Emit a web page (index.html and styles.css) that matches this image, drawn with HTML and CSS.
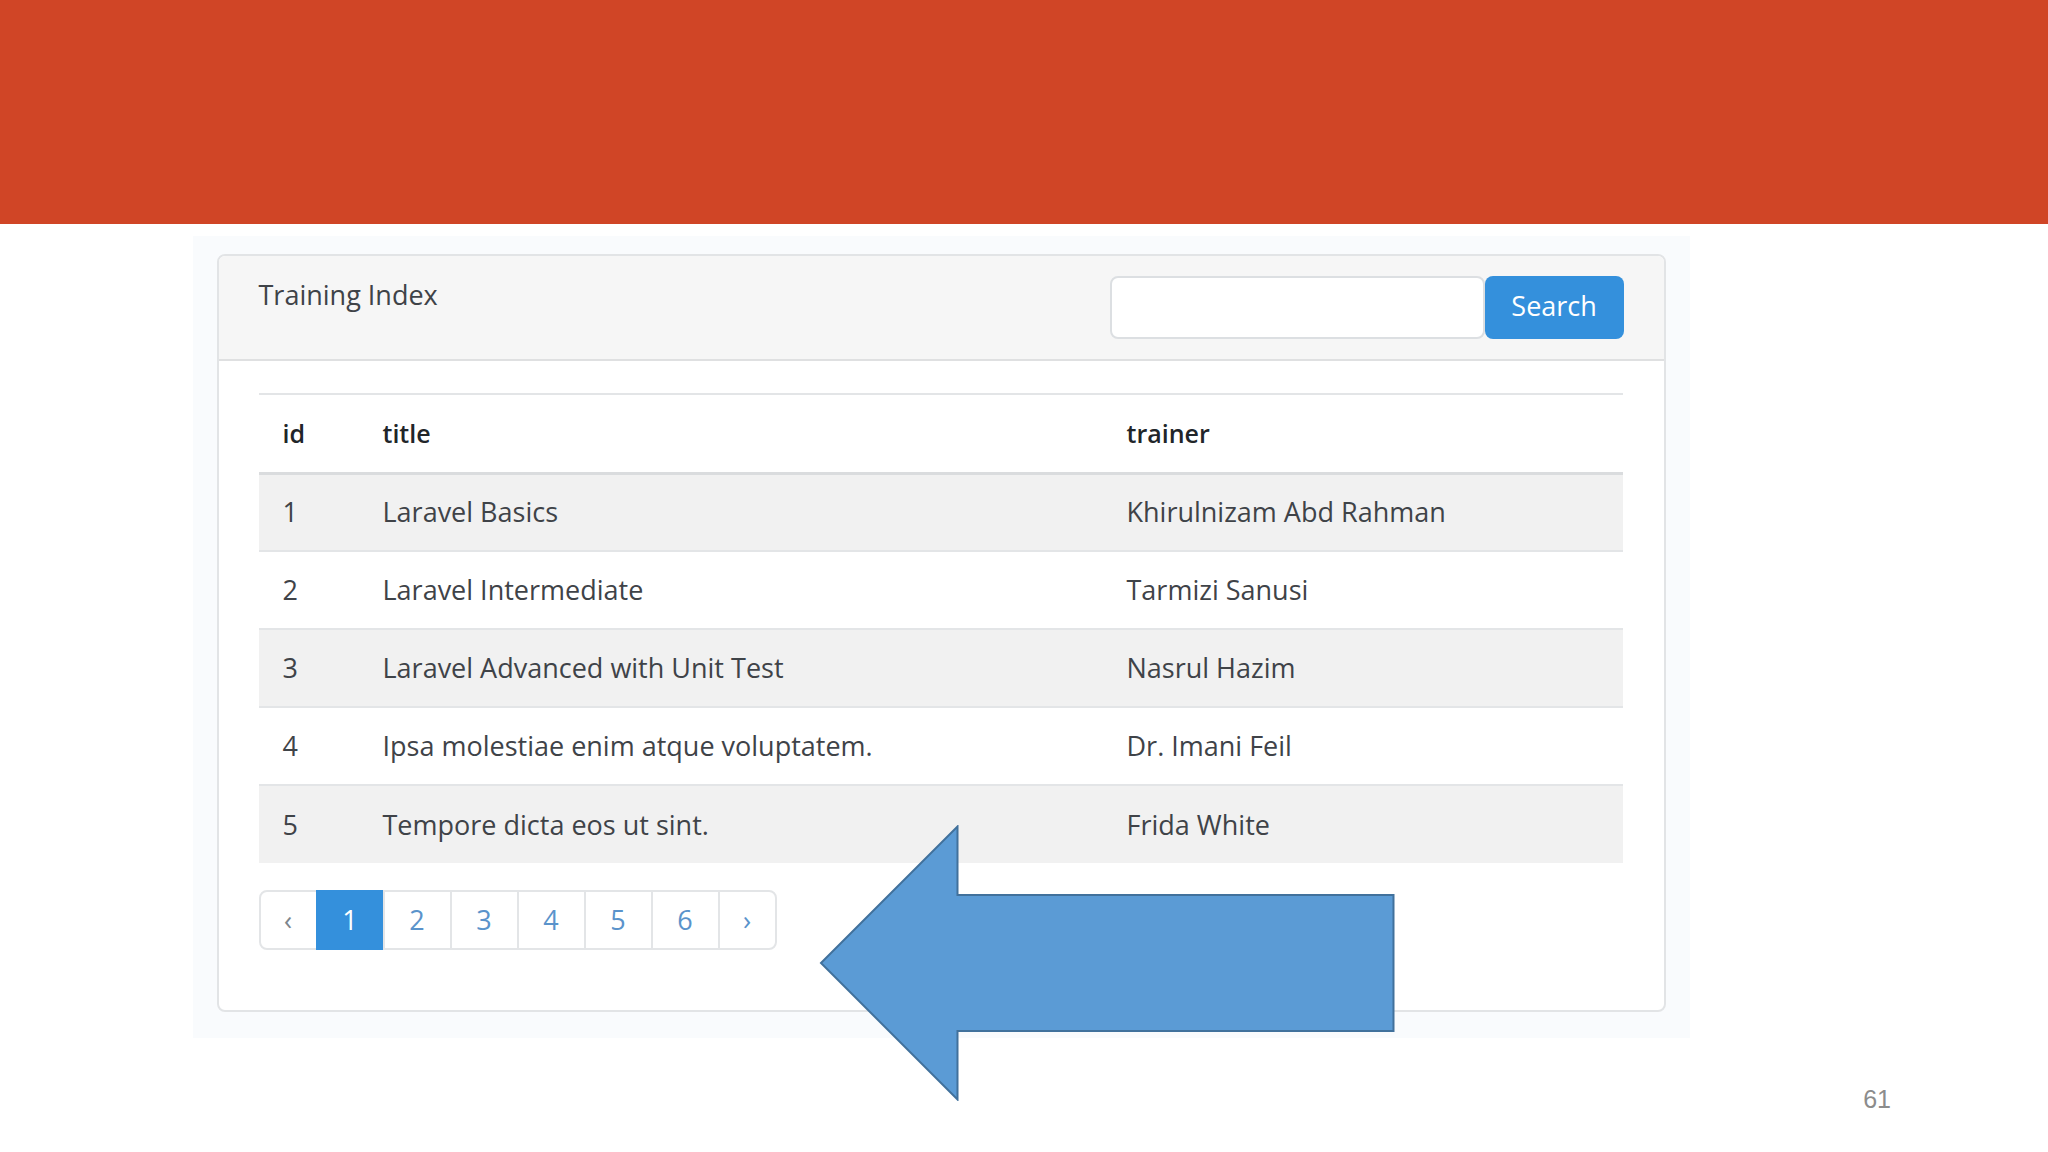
FILE: index.html
```
<!DOCTYPE html>
<html lang="en">
<head>
    <meta charset="UTF-8">
    <meta name="viewport" content="width=device-width, initial-scale=1.0">
    <title>Training Index</title>
    <link rel="stylesheet" href="styles.css">
</head>
<body>

<header class="banner"></header>

<main class="app">
    <div class="card">
        <div class="card-header">
            <span>Training Index</span>
            <form class="search-form">
                <input type="text" class="search-input" aria-label="Search">
                <button type="submit" class="search-button">Search</button>
            </form>
        </div>

        <div class="card-body">
            <table class="table">
                <thead>
                    <tr>
                        <th class="col-id">id</th>
                        <th class="col-title">title</th>
                        <th>trainer</th>
                    </tr>
                </thead>
                <tbody>
                    <tr>
                        <td>1</td>
                        <td>Laravel Basics</td>
                        <td>Khirulnizam Abd Rahman</td>
                    </tr>
                    <tr>
                        <td>2</td>
                        <td>Laravel Intermediate</td>
                        <td>Tarmizi Sanusi</td>
                    </tr>
                    <tr>
                        <td>3</td>
                        <td>Laravel Advanced with Unit Test</td>
                        <td>Nasrul Hazim</td>
                    </tr>
                    <tr>
                        <td>4</td>
                        <td>Ipsa molestiae enim atque voluptatem.</td>
                        <td>Dr. Imani Feil</td>
                    </tr>
                    <tr>
                        <td>5</td>
                        <td>Tempore dicta eos ut sint.</td>
                        <td>Frida White</td>
                    </tr>
                </tbody>
            </table>

            <nav>
                <ul class="pagination">
                    <li class="disabled"><span>‹</span></li>
                    <li class="active"><span>1</span></li>
                    <li><a href="#">2</a></li>
                    <li><a href="#">3</a></li>
                    <li><a href="#">4</a></li>
                    <li><a href="#">5</a></li>
                    <li><a href="#">6</a></li>
                    <li><a href="#">›</a></li>
                </ul>
            </nav>
        </div>
    </div>

    <!-- arrow pointing at the pagination -->
    <svg class="arrow" viewBox="0 0 576 276">
        <path d="M2 138L138.500 1.500V70H574.500V206H138.500V274.500Z"/>
    </svg>
</main>

<footer class="page-number">61</footer>

</body>
</html>
```
FILE: styles.css
```
* {
    box-sizing: border-box;
}

body {
    margin: 0;
    background-color: #fff;
    color: #3f4348;
    font-family: "Open Sans", "Noto Sans", sans-serif;
    font-size: 27px;
    line-height: 38px;
}

.banner {
    height: 224px;
    background-color: #d04526;
}

.app {
    position: relative;
    width: 73.1%;
    margin: 12px 0 0 9.4%;
    padding: 18px 24px 26px;
    background-color: #f9fbfd;
}

.card {
    background-color: #fff;
    border: 2px solid #e2e4e6;
    border-radius: 8px;
}

.card-header {
    display: flex;
    justify-content: space-between;
    padding: 20px 40px;
    background-color: #f6f6f6;
    border-bottom: 2px solid #dfe0e1;
    border-radius: 6px 6px 0 0;
}

.search-form {
    display: flex;
}

.search-input {
    width: 375px;
    height: 63px;
    padding: 8px 20px;
    border: 2px solid #dcdfe2;
    border-radius: 8px;
    background-color: #fff;
    font: inherit;
}

.search-button {
    width: 139px;
    height: 63px;
    padding: 0 0 4px;
    border: none;
    border-radius: 8px;
    background-color: #3490dc;
    color: #fff;
    font: inherit;
    cursor: pointer;
}

.card-body {
    padding: 32px 41px 60px 40px;
}

.table {
    width: 100%;
    table-layout: fixed;
    border-collapse: collapse;
}

.table th,
.table td {
    height: 78px;
    padding: 0 24px;
    border-top: 2px solid #e3e5e7;
    text-align: left;
}

.table th {
    height: 79px;
    color: #212529;
    font-size: 25px;
    font-weight: 600;
    border-bottom: 3px solid #dadcde;
}

.table tbody tr:nth-child(odd) {
    background-color: #f1f1f1;
}

.col-id {
    width: 100px;
}

.col-title {
    width: 744px;
}

/* pagination */
.pagination {
    display: flex;
    margin: 27px 0 0;
    padding: 0;
    list-style: none;
}

.pagination a,
.pagination span {
    display: block;
    width: 69px;
    padding: 9px 0;
    border: 2px solid #e3e5e7;
    margin-left: -2px;
    color: #5a93cb;
    text-align: center;
    text-decoration: none;
}

.pagination li:first-child span {
    width: 59px;
    margin-left: 0;
    border-radius: 8px 0 0 8px;
}

.pagination li:last-child a {
    width: 59px;
    border-radius: 0 8px 8px 0;
}

.pagination .disabled span {
    color: #7d858c;
}

.pagination .active span {
    background-color: #3490dc;
    border-color: #3490dc;
    color: #fff;
}

.arrow {
    position: absolute;
    top: 589px;
    left: 626px;
    width: 576px;
    height: 276px;
    fill: #5b9bd5;
    stroke: #41719c;
    stroke-width: 2px;
}

.page-number {
    padding: 42px 157px 0 0;
    color: #8c8c8c;
    font-family: "Liberation Sans", Arial, sans-serif;
    font-size: 25px;
    text-align: right;
}
```
